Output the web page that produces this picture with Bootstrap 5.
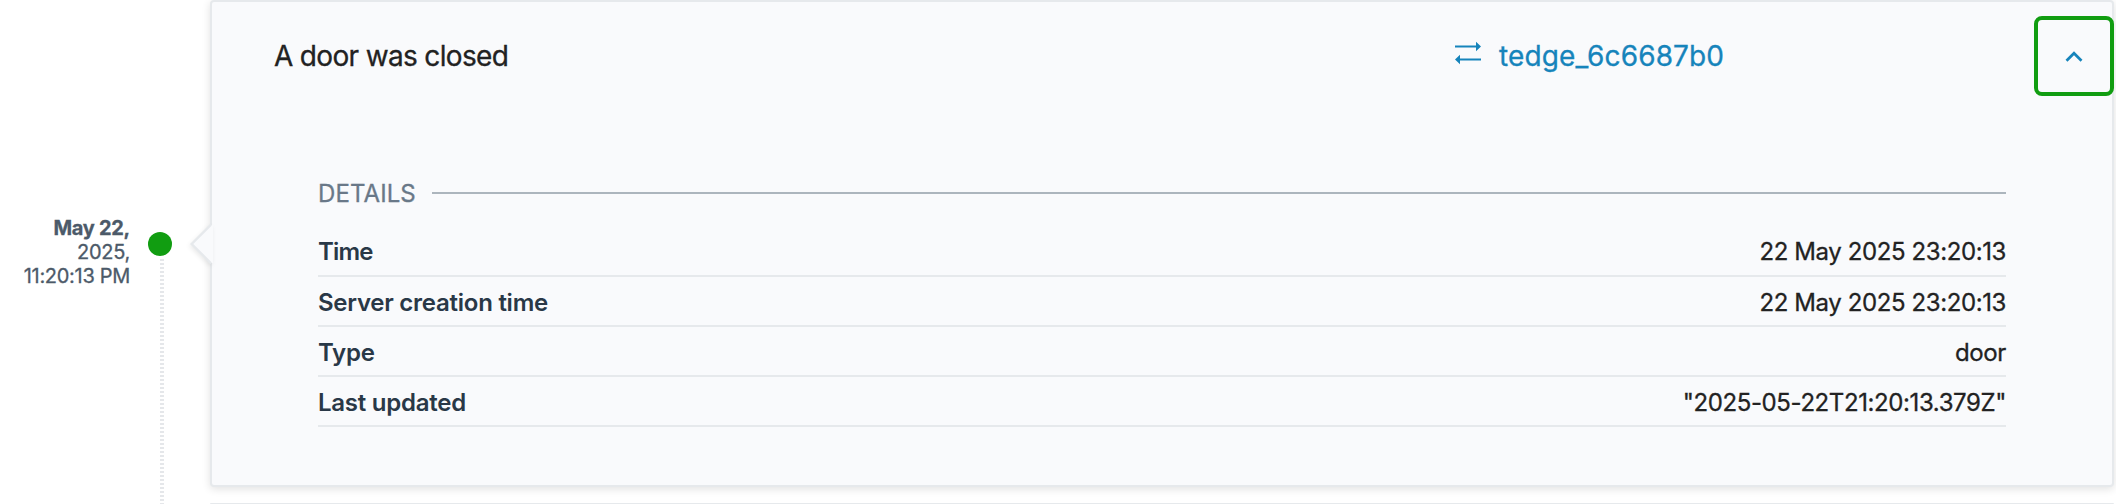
<!DOCTYPE html>
<html lang="en">
<head>
<meta charset="utf-8">
<title>Events timeline</title>
<link href="https://cdn.jsdelivr.net/npm/bootstrap@5.3.0/dist/css/bootstrap.min.css" rel="stylesheet">
<style>
body { font-family: Inter, "Liberation Sans", sans-serif; color: #222; background: #fff; -webkit-text-stroke: .3px currentColor; }
.timeline { height: 504px; }
.when { width: 130px; padding-top: 216px; font-size: 20px; line-height: 24px; letter-spacing: -.3px; color: #4c5a69; }
.rail { width: 80px; padding: 232px 0 0 18px; }
.dot { width: 24px; height: 24px; border-radius: 50%; background: #119d11; }
.dots { width: 4px; margin-left: 12px; margin-top: 1px; background: repeating-linear-gradient(#fff 0 2px, #e5e7ea 2px 4px); }
.event-card { width: 1904px; height: 487px; background: #f9fafc; border: 2px solid #e6e9ec; border-radius: 4px; box-shadow: 0 2px 8px rgba(0,0,0,.12); }
.next-card { width: 1904px; height: 1px; margin-top: 16px; background: #e6e9ec; border-radius: 4px 4px 0 0; }
.pointer { left: -22px; top: 222px; width: 23px; height: 40px; filter: drop-shadow(-1px 2px 2px rgba(0,0,0,.08)); }
.headline { height: 108px; font-size: 28px; line-height: 40px; padding: 34px 0 0 62px; }
.headline-text { width: 1181px; letter-spacing: -.66px; }
.device { color: #1684bb; text-decoration: none; letter-spacing: .12px; gap: 18px; }
.toggle { width: 80px; height: 80px; margin: -20px -2px 0 0; border: 4px solid #119d11; border-radius: 8px; background: transparent; padding: 0; }
.details { margin: 65px 106px 0; font-size: 24px; }
.legend-row { color: #697888; line-height: 36px; gap: 16px; letter-spacing: .1px; }
.legend-row span { height: 36px; line-height: 38px; }
.legend-row hr { height: 2px; border: 0; background: #acb5bd; opacity: 1; }
.entry { height: 50px; border-bottom: 2px solid #e6e9ec; line-height: 48px; padding-top: 2px; }
.entry dt { font-weight: 600; color: #293847; letter-spacing: -.25px; -webkit-text-stroke: 0; }
.entry dd { letter-spacing: -.4px; }
.entry:first-child { padding-top: 1px; }
.entry:first-child dt, .entry:first-child dd { line-height: 47px; }
.entry:first-child dt { letter-spacing: -.8px; }
</style>
</head>
<body>
<main class="timeline d-flex overflow-hidden">
  <div class="when text-end flex-shrink-0"><strong>May 22,</strong><br>2025,<br>11:20:13 PM</div>
  <div class="rail d-flex flex-column flex-shrink-0">
    <div class="dot flex-shrink-0"></div>
    <div class="dots flex-grow-1"></div>
  </div>
  <div class="flex-shrink-0">
    <article class="event-card position-relative">
      <svg class="pointer position-absolute" viewBox="0 0 23 40"><path d="M23 1H21L2 20l19 19h2z" fill="#f9fafc"/><path d="M21 .700 1.700 20 21 39.300" fill="none" stroke="#e6e9ec" stroke-width="2.400"/></svg>
      <header class="headline d-flex">
        <div class="headline-text">A door was closed</div>
        <a class="device d-flex" href="#">
          <svg width="26" height="26" viewBox="0 0 26 26" class="flex-shrink-0 mt-1"><path d="M0 6.500H22M4 19.500H26" stroke="#1684bb" stroke-width="2.200"/><path d="M21 1.700 26 6.500 21 11.300zM5 14.700 0 19.500 5 24.300z" fill="#1684bb"/></svg>
          <span class="device-name">tedge_6c6687b0</span>
        </a>
        <button class="toggle ms-auto d-flex align-items-center justify-content-center" type="button" aria-label="Collapse">
          <svg width="18" height="12" viewBox="0 0 18 12"><path d="M1.500 10.700 9 3.200l7.500 7.500" fill="none" stroke="#1684bb" stroke-width="2.700"/></svg>
        </button>
      </header>
      <section class="details">
        <div class="legend-row d-flex align-items-center"><span>DETAILS</span><hr class="flex-grow-1 m-0"></div>
        <dl class="mb-0 mt-3">
          <div class="entry d-flex justify-content-between"><dt>Time</dt><dd>22 May 2025 23:20:13</dd></div>
          <div class="entry d-flex justify-content-between"><dt>Server creation time</dt><dd>22 May 2025 23:20:13</dd></div>
          <div class="entry d-flex justify-content-between"><dt>Type</dt><dd>door</dd></div>
          <div class="entry d-flex justify-content-between"><dt>Last updated</dt><dd>"2025-05-22T21:20:13.379Z"</dd></div>
        </dl>
      </section>
    </article>
    <div class="next-card"></div>
  </div>
</main>
<script src="https://cdn.jsdelivr.net/npm/bootstrap@5.3.0/dist/js/bootstrap.bundle.min.js"></script>
</body>
</html>
